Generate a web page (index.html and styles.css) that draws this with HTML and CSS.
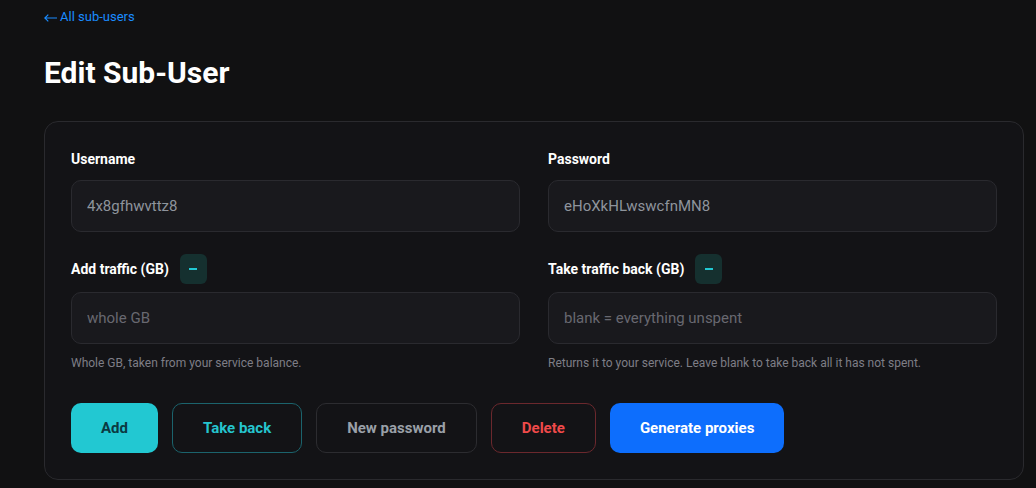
FILE: index.html
```html
<!DOCTYPE html>
<html lang="en">
<head>
<meta charset="utf-8">
<title>Edit Sub-User</title>
<link rel="stylesheet" href="styles.css">
</head>
<body>
<div class="page">
  <a class="back" href="#"><svg class="arrow" width="13" height="8" viewBox="0 0 13 8" aria-hidden="true"><path d="M0.8 4H13M4.3 0.6L0.8 4L4.3 7.4" fill="none" stroke="currentColor" stroke-width="1.2"/></svg><span>All sub-users</span></a>
  <h1 class="title">Edit Sub-User</h1>
  <div class="card">
    <div class="grid">
      <div class="field">
        <div class="label-row"><label class="label">Username</label></div>
        <input class="input" type="text" value="4x8gfhwvttz8">
      </div>
      <div class="field">
        <div class="label-row"><label class="label">Password</label></div>
        <input class="input" type="text" value="eHoXkHLwswcfnMN8">
      </div>
      <div class="field field-gap">
        <div class="label-row label-row-btn">
          <label class="label">Add traffic (GB)</label>
          <button class="mini" type="button"><span class="minus"></span></button>
        </div>
        <input class="input" type="text" placeholder="whole GB">
        <div class="hint">Whole GB, taken from your service balance.</div>
      </div>
      <div class="field field-gap">
        <div class="label-row label-row-btn">
          <label class="label">Take traffic back (GB)</label>
          <button class="mini" type="button"><span class="minus"></span></button>
        </div>
        <input class="input" type="text" placeholder="blank = everything unspent">
        <div class="hint">Returns it to your service. Leave blank to take back all it has not spent.</div>
      </div>
    </div>
    <div class="actions">
      <button class="btn btn-add" type="button">Add</button>
      <button class="btn btn-outline btn-take" type="button">Take back</button>
      <button class="btn btn-outline btn-muted" type="button">New password</button>
      <button class="btn btn-outline btn-danger" type="button">Delete</button>
      <button class="btn btn-primary" type="button">Generate proxies</button>
    </div>
  </div>
</div>
</body>
</html>
```
FILE: styles.css
```css
* { box-sizing: border-box; }
html, body { margin: 0; padding: 0; }
body {
  background: #111112;
  font-family: Roboto, "Liberation Sans", Arial, sans-serif;
  color: #fff;
}
.page {
  padding: 9px 12px 0 44px;
}
.back {
  display: flex;
  align-items: center;
  gap: 3px;
  font-size: 13px;
  line-height: 16px;
  height: 16px;
  color: #1a8cff;
  text-decoration: none;
}
.arrow {
  display: block;
  margin-top: 1px;
}
.title {
  margin: 30px 0 30px;
  font-size: 30px;
  line-height: 36px;
  font-weight: 700;
  color: #fff;
}
.card {
  border: 1px solid #2a2a2e;
  border-radius: 14px;
  background: #131316;
  padding: 26px;
}
.grid {
  display: grid;
  grid-template-columns: 1fr 1fr;
  column-gap: 28px;
}
.field { display: flex; flex-direction: column; }
.field-gap { margin-top: 22px; }
.label-row {
  display: flex;
  align-items: center;
  gap: 11px;
  height: 22px;
  margin-bottom: 10px;
}
.label-row-btn {
  height: 30px;
  margin-bottom: 8px;
}
.label {
  font-size: 14px;
  font-weight: 700;
  color: #fff;
}
.mini {
  width: 27px;
  height: 30px;
  border: 0;
  border-radius: 6px;
  background: #15302f;
  display: flex;
  align-items: center;
  justify-content: center;
  padding: 0;
}
.minus {
  display: block;
  width: 8px;
  height: 2px;
  background: #22c8d2;
}
.input {
  height: 52px;
  width: 100%;
  background: #19191d;
  border: 1px solid #2a2a2f;
  border-radius: 10px;
  padding: 0 15px;
  font-family: inherit;
  font-size: 15px;
  color: #8e949c;
  outline: none;
}
.input::placeholder { color: #686870; }
.hint {
  margin-top: 11px;
  font-size: 12px;
  line-height: 16px;
  color: #7e7e86;
}
.actions {
  display: flex;
  gap: 14px;
  margin-top: 32px;
}
.btn {
  height: 50px;
  padding: 0 29px;
  border-radius: 10px;
  font-family: inherit;
  font-size: 15px;
  font-weight: 700;
  background: transparent;
  border: 1px solid transparent;
}
.btn-outline { padding: 0 30px; }
.btn-add { background: #22c8d2; color: #0b3a42; }
.btn-take { border-color: #1b636c; color: #25c4ce; }
.btn-muted { border-color: #2c2c30; color: #9aa0a8; }
.btn-danger { border-color: #6b282d; color: #f04a4a; }
.btn-primary { background: #0d6efd; color: #fff; }
```
